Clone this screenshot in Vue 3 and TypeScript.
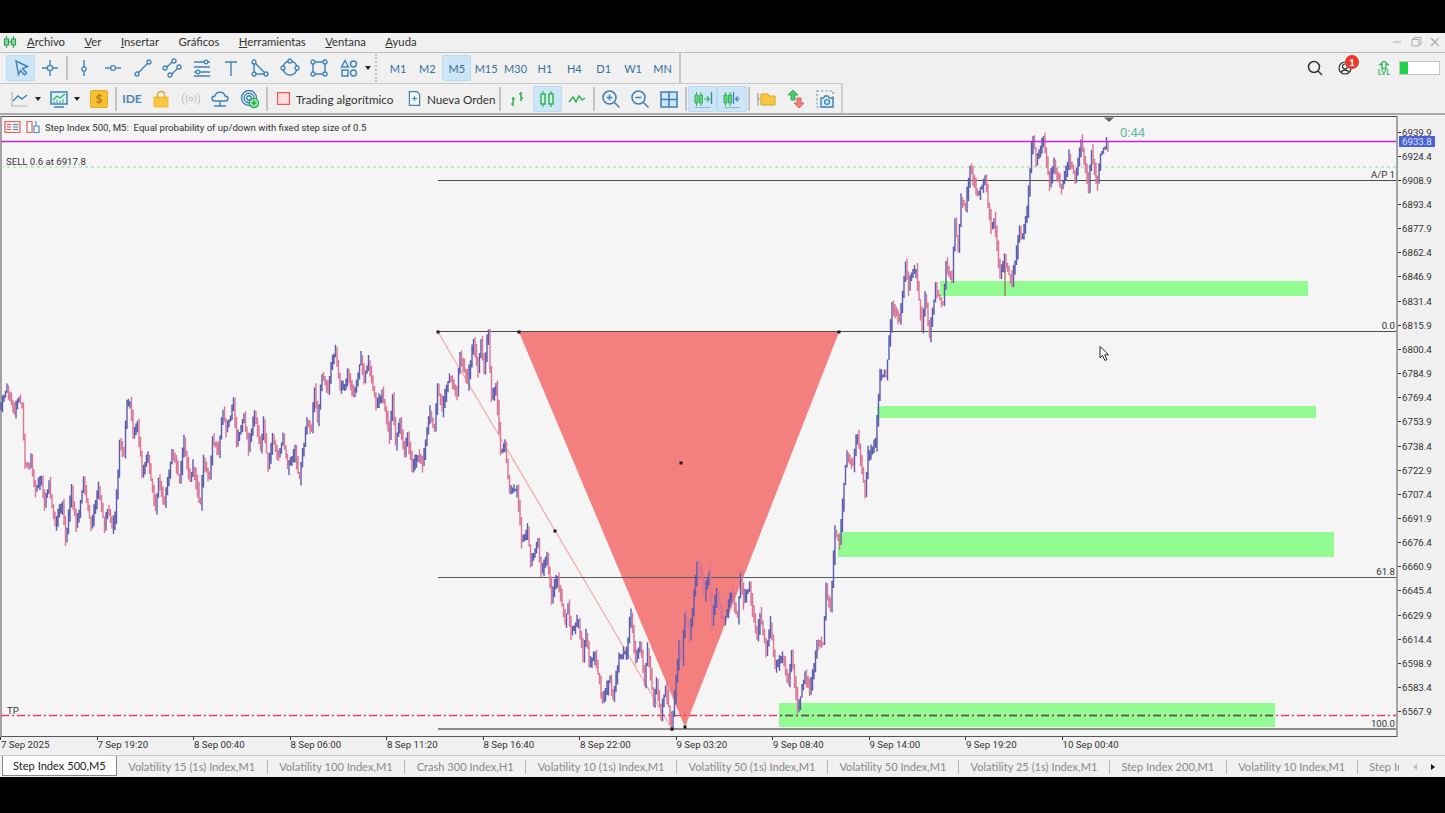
<script setup lang="ts">
interface Part {
  d: string
  c?: string
  f?: string
  w?: number
  dash?: string
}

interface ToolItem {
  kind: 'btn' | 'sep' | 'grip' | 'caret' | 'tf' | 'word' | 'coin' | 'wide'
  w: number
  ml?: number
  on?: boolean
  text?: string
  parts?: Part[]
}

const BLUE = '#3f83b9'
const GREEN = '#2fb457'

const ring = (x: number, y: number, r: number) =>
  `M${x - r} ${y}a${r} ${r} 0 1 0 ${r * 2} 0a${r} ${r} 0 1 0 ${-r * 2} 0Z`

const ln = (d: string, c = BLUE, w = 1.4): Part => ({ d, c, w })
const nodes = (pts: number[][], r = 2): Part[] =>
  pts.map(([x, y]) => ({ d: ring(x, y, r), c: BLUE, f: '#f0f0f0', w: 1.3 }))

const btn = (parts: Part[], on = false, w = 29.4, ml = 0): ToolItem => ({ kind: 'btn', w, on, ml, parts })
const sep = (w: number): ToolItem => ({ kind: 'sep', w })

const topTools: ToolItem[] = [
  btn([ln('M5 3L16.5 8.5L11.5 10.5L15.5 15L13.5 17L9.5 12.5L7.5 16.5Z')], true),
  btn([ln('M10 2V18M2 10H18'), ...nodes([[10, 10]], 2.6)]),
  sep(4.6),
  btn([ln('M10 2V18'), ...nodes([[10, 11]], 2.2)]),
  btn([ln('M2 10H18'), ...nodes([[10, 10]], 2.4)]),
  btn([ln('M4 16L16 4'), ...nodes([[4, 16], [16, 4]])]),
  btn([ln('M3 11L11 3M9 17L17 9'), ...nodes([[3, 10], [12, 3], [8, 17], [17, 9]])]),
  btn([ln('M2 4H18M2 9H18M2 14H18M2 18H18'), ...nodes([[14, 4], [6, 14]], 1.8)]),
  btn([ln('M4 4H16M10 4V18')]),
  btn([ln('M4 4V16H16L4 4'), ...nodes([[4, 4], [4, 16], [16, 16]])]),
  btn([ln(ring(10, 10, 7)), ...nodes([[10, 3], [3, 10], [17, 10]])]),
  btn([ln('M4 4H16V16H4Z'), ...nodes([[4, 4], [16, 4], [4, 16], [16, 16]])]),
  btn([ln('M6 2.5L9.5 9H2.5Z'), ln(ring(14.5, 6, 3)), ln('M3 12H9V18H3Z'), ln(ring(14.5, 15, 3))]),
  { kind: 'caret', w: 9 },
  { kind: 'grip', w: 11 },
  ...['M1', 'M2', 'M5', 'M15', 'M30', 'H1', 'H4', 'D1', 'W1', 'MN'].map(
    (text): ToolItem => ({ kind: 'tf', w: 29.4, text, on: text === 'M5' })
  ),
]

const shift: Part[] = [
  { d: 'M3.500 3V17M8 3V17', c: GREEN, w: 1 },
  { d: 'M2 6H5V14H2ZM6.500 6H9.500V14H6.500Z', c: GREEN, f: '#6fd08c', w: 1 },
]

const bottomTools: ToolItem[] = [
  btn([ln('M2 3V17H18', '#b5b5b5', 1.2), ln('M3 12L8 7L12 10L17 6')], false, 28),
  { kind: 'caret', w: 8 },
  btn(
    [
      { d: 'M2 3H18V15H2Z', c: BLUE, f: '#dff0f8', w: 1.5 },
      ln('M4 11L8 7L11 9L16 5', GREEN, 1.2),
      ln('M5 14V12M8 14V11M11 14V12M14 14V10', GREEN, 1),
      ln('M5 18H15', BLUE, 1.5),
    ],
    false,
    28,
    3
  ),
  { kind: 'caret', w: 8 },
  { kind: 'coin', w: 30, ml: 3, text: '$' },
  sep(3.3),
  { kind: 'word', w: 29.4, text: 'IDE' },
  btn([
    { d: 'M3 8H17V18H3Z', c: '#f4bd32', f: '#f6c544', w: 1 },
    ln('M6.5 9V5.5C6.5 1.5 13.5 1.5 13.5 5.5V9', '#e0a020', 1.3),
  ]),
  btn([
    ln(ring(10, 10, 1.8), '#c6c6c6', 1.3),
    ln('M6.5 6C4.5 8 4.5 12 6.5 14M13.5 6C15.5 8 15.5 12 13.5 14M3.5 4C0.5 8 0.5 12 3.5 16M16.5 4C19.5 8 19.5 12 16.5 16', '#c6c6c6', 1.2),
  ]),
  btn([ln('M5 12C1 12 1 7 5 7C6 2 14 2 15 7C19 7 19 12 15 12ZM10 12V17M4 17H16')]),
  btn([
    ln(ring(9, 9, 7.5)),
    ln(ring(9, 9, 4.8)),
    ln(ring(9, 9, 2.2)),
    { d: ring(14, 14, 4.6), c: '#22a84f', f: '#8fe6a6', w: 1.1 },
    ln('M11.8 14H16.2M14 11.8V16.2', '#128a3a', 1.1),
  ]),
  sep(5),
  {
    kind: 'wide',
    w: 127,
    text: 'Trading algorítmico',
    parts: [{ d: 'M3 3H17V17H3Z', c: '#e2605c', f: '#fbe0de', w: 1.5 }],
  },
  {
    kind: 'wide',
    w: 96,
    ml: 4,
    text: 'Nueva Orden',
    parts: [
      { d: 'M4 2H13L16 5V18H4Z', c: BLUE, f: '#f7fbfd', w: 1.4 },
      ln('M7 10H13M10 7V13'),
    ],
  },
  sep(7),
  btn([ln('M5 17V8M3 15H5M5 10H7M13 12V3M11 5H13M13 9H15', GREEN, 1.6)]),
  btn(
    [
      { d: 'M6 2V18M14 2V18', c: GREEN, w: 1.2 },
      { d: 'M4 5H8V15H4ZM12 5H16V15H12Z', c: GREEN, f: '#d7f2df', w: 1.5 },
    ],
    true
  ),
  btn([ln('M2 13L6 8L9 13L12 7L15 11L18 9', GREEN, 1.5)]),
  sep(4.5),
  btn([ln(ring(8.5, 8.5, 6.5), BLUE, 1.6), ln('M13.5 13.5L18.5 18.5M5.5 8.5H11.5M8.5 5.5V11.5', BLUE, 1.5)]),
  btn([ln(ring(8.5, 8.5, 6.5), BLUE, 1.6), ln('M13.5 13.5L18.5 18.5M5.5 8.5H11.5', BLUE, 1.5)]),
  btn([{ d: 'M2 3H18V18H2Z', c: BLUE, f: '#cfe6f3', w: 1.6 }, ln('M2 10.5H18M10 3V18', BLUE, 1.6)]),
  sep(4),
  btn([...shift, ln('M11 10H16M14 7.5L16.5 10L14 12.5', GREEN, 1.2), ln('M18.500 3V15', BLUE, 1.4), ln('M2 18.500H18', '#9fb2c0', 1)], true),
  btn([...shift, ln('M18 10H14M16 7.5L13.5 10L16 12.5', BLUE, 1.2), ln('M11.500 3V15', BLUE, 1.4), ln('M2 18.500H18', '#9fb2c0', 1)], true),
  sep(5),
  btn([
    ln('M1 4V17M1 10H4', '#999', 1.2),
    { d: 'M4 5H11L12 7H18V16H4Z', c: '#d9a520', f: '#f6c940', w: 1 },
  ]),
  btn([
    { d: 'M7 1L12 6H9V11H5V6H2Z', c: GREEN, f: '#4cc873', w: 1 },
    { d: 'M13 19L18 14H15V9H11V14H8Z', c: '#e4605c', f: '#f0827e', w: 1 },
  ]),
  btn([
    { d: 'M2 2H18V18H2Z', c: '#7a8a96', w: 1.1, dash: '2.2 2' },
    { d: 'M6 9H8.5L10 7H13L14.5 9H18V18H6Z', c: BLUE, f: '#dcecf6', w: 1.4 },
    ln(ring(12, 13, 2.4), BLUE, 1.3),
  ]),
]

const menus = [
  ['A', 'rchivo'],
  ['V', 'er'],
  ['I', 'nsertar'],
  ['', 'Gráficos'],
  ['H', 'erramientas'],
  ['V', 'entana'],
  ['A', 'yuda'],
]

const legend = 'Step Index 500, M5:  Equal probability of up/down with fixed step size of 0.5'

const prices = Array.from({ length: 25 }, (_, i) => (6939.9 - i * 15.5).toFixed(1))

const times = [
  '7 Sep 2025',
  '7 Sep 19:20',
  '8 Sep 00:40',
  '8 Sep 06:00',
  '8 Sep 11:20',
  '8 Sep 16:40',
  '8 Sep 22:00',
  '9 Sep 03:20',
  '9 Sep 08:40',
  '9 Sep 14:00',
  '9 Sep 19:20',
  '10 Sep 00:40',
]

const tabs = [
  'Volatility 15 (1s) Index,M1',
  'Volatility 100 Index,M1',
  'Crash 300 Index,H1',
  'Volatility 10 (1s) Index,M1',
  'Volatility 50 (1s) Index,M1',
  'Volatility 50 Index,M1',
  'Volatility 25 (1s) Index,M1',
  'Step Index 200,M1',
  'Volatility 10 Index,M1',
]

const zones = [
  { x: 940, y: 281, w: 368, h: 15 },
  { x: 877, y: 406, w: 439, h: 12 },
  { x: 838, y: 532, w: 496, h: 25 },
  { x: 779, y: 703, w: 496, h: 24 },
]

const levels = [
  { y: 180.5, label: 'A/P 1', color: '#4a4a4a', w: 1.2 },
  { y: 331.5, label: '0.0', color: '#4a4a4a', w: 1.2 },
  { y: 577.5, label: '61.8', color: '#5a5a5a', w: 1.2 },
  { y: 729, label: '100.0', color: '#8a8a8a', w: 2 },
]

const handles = [
  [438, 332],
  [519, 332],
  [839, 332],
  [685, 727],
  [672, 729],
  [555, 531],
  [681, 463],
]

// rough path of the price, in page pixels
const path = [
  [0, 410], [18, 402], [30, 470], [65, 522], [85, 500], [112, 520], [130, 402], [155, 495],
  [175, 458], [200, 480], [225, 422], [260, 440], [298, 462], [330, 360], [345, 392], [365, 362],
  [380, 400], [418, 468], [440, 398], [470, 358], [487, 350], [500, 430], [525, 545], [545, 572],
  [585, 645], [610, 694], [630, 632], [650, 680], [672, 712], [685, 632], [700, 582], [720, 610],
  [745, 592], [765, 642], [800, 686], [815, 676], [830, 590], [845, 480], [857, 440], [865, 482],
  [885, 362], [910, 260], [925, 320], [945, 288], [970, 176], [985, 198], [1005, 272], [1022, 234],
  [1032, 150], [1060, 176], [1075, 156], [1097, 178], [1107, 130],
]

function priceAt(x: number): number {
  for (let i = 1; i < path.length; i++) {
    if (x <= path[i][0]) {
      const [x0, y0] = path[i - 1]
      const [x1, y1] = path[i]
      return y0 + ((y1 - y0) * (x - x0)) / (x1 - x0)
    }
  }
  return path[path.length - 1][1]
}

function buildCandles() {
  let seed = 90217
  const rnd = () => {
    seed = (seed * 16807) % 2147483647
    return seed / 2147483647
  }
  let up = ''
  let down = ''
  let prev = priceAt(0)
  let zig = 0
  let aim = 0
  let left = 0
  let sign = 1
  for (let x = 1; x <= 1109; x += 1.5) {
    if (left <= 0) {
      sign = -sign
      aim = sign * (6 + rnd() * 20)
      left = 2 + Math.floor(rnd() * 4)
    }
    zig += (aim - zig) / left
    left--
    const close = priceAt(x) + zig
    const top = Math.max(124, Math.min(prev, close) - rnd() * 8)
    const bottom = Math.min(731, Math.max(prev, close) + rnd() * 8)
    const seg = `M${x} ${top.toFixed(1)}V${bottom.toFixed(1)}`
    if (close < prev) up += seg
    else down += seg
    prev = close
  }
  return { up, down }
}

const candles = buildCandles()
</script>

<template>
  <div class="screen">
    <div class="window">
      <header class="titlebar">
        <svg class="logo" viewBox="0 0 14 14" width="14" height="14">
          <path d="M3.5 1V13M10.5 1V13" stroke="#39a85a" stroke-width="1.2" />
          <path d="M1.5 4H5.5V10H1.5ZM8.5 4H12.5V10H8.5Z" fill="#8fd8a4" stroke="#2d9a4f" stroke-width="1.2" />
          <path d="M5.5 7H8.5" stroke="#2d9a4f" stroke-width="1.2" />
        </svg>
        <nav class="menu">
          <span v-for="m in menus" :key="m[1]" class="menu-item"><u>{{ m[0] }}</u>{{ m[1] }}</span>
        </nav>
        <div class="win-btns">
          <svg viewBox="0 0 46 12" width="46" height="12">
            <path d="M0 6H8" stroke="#bbb" stroke-width="1.2" />
            <path d="M19 3.500H26V10H19ZM21 3.500V1.500H28V8H26" fill="none" stroke="#aaa" stroke-width="1" />
            <path d="M38 2L46 10M46 2L38 10" stroke="#aaa" stroke-width="1.2" />
          </svg>
        </div>
      </header>

      <div class="toolrow">
        <div class="group group-top">
          <template v-for="(t, i) in topTools" :key="i">
            <span v-if="t.kind === 'sep'" class="sep" :style="{ width: t.w + 'px' }"></span>
            <span v-else-if="t.kind === 'grip'" class="grip" :style="{ width: t.w + 'px' }"></span>
            <span v-else-if="t.kind === 'caret'" class="caret-box" :style="{ width: t.w + 'px' }"><i class="caret"></i></span>
            <span v-else-if="t.kind === 'tf'" class="tool tf" :class="{ on: t.on }" :style="{ width: t.w + 'px' }">{{ t.text }}</span>
            <span v-else class="tool" :class="{ on: t.on }" :style="{ width: t.w + 'px' }">
              <svg viewBox="0 0 20 20" width="20" height="20">
                <path
                  v-for="(p, n) in t.parts"
                  :key="n"
                  :d="p.d"
                  :stroke="p.c"
                  :fill="p.f || 'none'"
                  :stroke-width="p.w"
                  :stroke-dasharray="p.dash"
                />
              </svg>
            </span>
          </template>
        </div>
        <div class="status">
          <svg viewBox="0 0 16 16" width="16" height="16" class="st-search">
            <path d="M1.500 7A5.500 5.500 0 1 0 12.500 7A5.500 5.500 0 1 0 1.500 7ZM11 11L15 15" fill="none" stroke="#333" stroke-width="1.5" />
          </svg>
          <span class="st-user">
            <svg viewBox="0 0 14 14" width="14" height="14">
              <path d="M1 7A6 6 0 1 0 13 7A6 6 0 1 0 1 7ZM4.500 5.500A2.500 2.500 0 1 0 9.500 5.500A2.500 2.500 0 1 0 4.500 5.500ZM3 11C5 8.500 9 8.500 11 11" fill="none" stroke="#333" stroke-width="1.2" />
            </svg>
            <b class="badge">1</b>
          </span>
          <span class="st-lvl">
            <svg viewBox="0 0 14 8" width="14" height="8">
              <path d="M7 0L11 3.500H9V7.500H5V3.500H3Z" fill="none" stroke="#2fb457" stroke-width="1.3" />
            </svg>
            <em>LVL</em>
          </span>
          <span class="meter"><i></i></span>
        </div>
      </div>

      <div class="toolrow toolrow-low">
        <div class="group group-low">
          <template v-for="(t, i) in bottomTools" :key="i">
            <span v-if="t.kind === 'sep'" class="sep" :style="{ width: t.w + 'px' }"></span>
            <span v-else-if="t.kind === 'caret'" class="caret-box" :style="{ width: t.w + 'px' }"><i class="caret"></i></span>
            <span v-else-if="t.kind === 'word'" class="tool word" :style="{ width: t.w + 'px' }">{{ t.text }}</span>
            <span v-else-if="t.kind === 'coin'" class="tool" :style="{ width: t.w + 'px', marginLeft: t.ml + 'px' }"><b class="coin">{{ t.text }}</b></span>
            <span v-else class="tool" :class="{ on: t.on, wide: t.kind === 'wide' }" :style="{ width: t.w + 'px', marginLeft: (t.ml || 0) + 'px' }">
              <svg viewBox="0 0 20 20" :width="t.kind === 'wide' ? 17 : 20" :height="t.kind === 'wide' ? 17 : 20">
                <path
                  v-for="(p, n) in t.parts"
                  :key="n"
                  :d="p.d"
                  :stroke="p.c"
                  :fill="p.f || 'none'"
                  :stroke-width="p.w"
                  :stroke-dasharray="p.dash"
                />
              </svg>
              <span v-if="t.text" class="tool-text">{{ t.text }}</span>
            </span>
          </template>
        </div>
      </div>

      <main class="chart-row">
        <svg class="plot" viewBox="0 114 1398 624" width="1398" height="624">
          <rect x="1" y="116.500" width="1396" height="620" fill="#f5f5f5" stroke="#555" stroke-width="1" />

          <rect v-for="z in zones" :key="z.y" :x="z.x" :y="z.y" :width="z.w" :height="z.h" fill="#92fb92" />

          <path d="M519 332H839L685 727Z" fill="#f47f7f" />
          <path d="M438 332L672 729" stroke="#f5a8a8" stroke-width="1.2" />

          <path d="M1 167H1396" stroke="#93da93" stroke-width="1" stroke-dasharray="3 3" />
          <path d="M1 715.500H1396" stroke="#e8405c" stroke-width="1.3" stroke-dasharray="8 3 2 3" />
          <path d="M779 715.500H1275" stroke="#585858" stroke-width="1.3" stroke-dasharray="8 3 2 3" stroke-dashoffset="10" />

          <template v-for="l in levels" :key="l.y">
            <path :d="`M438 ${l.y}H1396`" :stroke="l.color" :stroke-width="l.w" />
            <text class="note" x="1395" :y="l.y - 2.5" text-anchor="end">{{ l.label }}</text>
          </template>

          <path :d="candles.up" stroke="#5d5cae" stroke-width="1.4" fill="none" />
          <path :d="candles.down" stroke="#dc7596" stroke-width="1.4" fill="none" />
          <path d="M1005 268V296" stroke="#9a6a55" stroke-width="1.2" />

          <rect v-for="(h, i) in handles" :key="i" :x="h[0] - 1.500" :y="h[1] - 1.500" width="3" height="3" fill="#1a1a1a" />

          <path d="M1 141.500H1396" stroke="#c425cf" stroke-width="1.6" />
          <path d="M1104 117.500H1114L1109 122Z" fill="#666" />

          <g class="legend-icons">
            <path d="M5 121.500H20V132.500H5Z" fill="#fbeaea" stroke="#e2605c" stroke-width="1.2" />
            <path d="M7 124.500H11M7 127H11M7 129.500H11" stroke="#e2605c" stroke-width="1.2" />
            <path d="M13 124.500H18M13 127H18M13 129.500H18" stroke="#4a8ac0" stroke-width="1.2" />
            <path d="M27 121.500H32V132.500H27Z" fill="#fff" stroke="#e2605c" stroke-width="1.2" />
            <path d="M34 126H39V132.500H34Z" fill="#fff" stroke="#4a8ac0" stroke-width="1.2" />
            <path d="M36 121V126" stroke="#4a8ac0" stroke-width="1.2" />
          </g>
          <text class="note" x="45" y="130.500">{{ legend }}</text>
          <text class="note" x="6" y="165">SELL 0.6 at 6917.8</text>
          <text class="note" x="7" y="714">TP</text>
          <text class="timer" x="1120" y="137">0:44</text>

          <path d="M1100 346.500V358L1102.500 355.500L1105 360.500L1107 359.500L1104.800 354.800H1108.500Z" fill="#fff" stroke="#222" stroke-width="1" />
        </svg>

        <div class="price-axis">
          <span v-for="p in prices" :key="p" class="price">{{ p }}</span>
          <span class="price-now">6933.8</span>
        </div>
      </main>

      <div class="time-axis">
        <span v-for="t in times" :key="t" class="time">{{ t }}</span>
      </div>

      <footer class="tabs">
        <span class="tab tab-active">Step Index 500,M5</span>
        <span v-for="t in tabs" :key="t" class="tab">{{ t }}</span>
        <span class="tab tab-cut">Step In</span>
        <span class="tab-nav">
          <i class="arrow arrow-left"></i>
          <i class="arrow arrow-right"></i>
        </span>
      </footer>
    </div>
  </div>
</template>

<style scoped>
.screen {
  width: 1445px;
  height: 813px;
  background: #000;
  padding-top: 33px;
  box-sizing: border-box;
  overflow: hidden;
  font-family: Lato, Roboto, sans-serif;
}

.window {
  height: 744px;
  background: #f0f0f0;
  display: flex;
  flex-direction: column;
}

.titlebar {
  height: 20px;
  flex: none;
  box-sizing: border-box;
  display: flex;
  align-items: center;
  border-bottom: 1px solid #bdbdbd;
  padding: 0 0 2px 3px;
}

.menu {
  display: flex;
  margin-left: 10px;
  gap: 19.500px;
  font-size: 11.300px;
  color: #333;
}

.menu-item u {
  text-decoration-thickness: 1px;
}

.win-btns {
  margin-left: auto;
  margin-right: 6px;
  display: flex;
}

.toolrow {
  display: flex;
  height: 30px;
  flex: none;
}

.toolrow-low {
  border-bottom: 2px solid #a9a9a9;
}

.group {
  display: flex;
  align-items: center;
  padding-left: 6px;
  box-sizing: border-box;
}

.group-top {
  width: 681px;
  border-right: 2px solid #c8c8c8;
}

.group-low {
  width: 843px;
  border-top: 1px solid #c8c8c8;
  border-right: 2px solid #d0d0d0;
}

.tool {
  height: 26px;
  flex: none;
  display: flex;
  align-items: center;
  justify-content: center;
  box-sizing: border-box;
  border-radius: 2px;
}

.tool svg {
  flex: none;
}

.tool.on {
  background: #cde6f7;
  outline: 1px solid #bcdcf1;
  outline-offset: -1px;
}

.tf {
  font-size: 11px;
  color: #33709f;
}

.word {
  font-size: 12px;
  font-weight: 700;
  color: #4a86b8;
}

.coin {
  width: 16px;
  height: 16px;
  border-radius: 2px;
  background: #f6c233;
  border: 1px solid #e8ab20;
  color: #b5781a;
  font-size: 12px;
  font-weight: 700;
  line-height: 16px;
  text-align: center;
}

.wide {
  justify-content: flex-start;
  gap: 3.7px;
  padding-left: 6px;
}

.tool-text {
  font-size: 11.700px;
  color: #333;
  white-space: nowrap;
}

.sep {
  flex: none;
  height: 24px;
  position: relative;
  display: flex;
  justify-content: center;
}

.sep::before {
  content: "";
  width: 2px;
  background: #c4c4c4;
}

.grip {
  flex: none;
  height: 28px;
  display: flex;
  justify-content: center;
}

.grip::before {
  content: "";
  width: 2px;
  margin-right: 1px;
  border-left: 2px dotted #c0c0c0;
}

.caret-box {
  flex: none;
  display: flex;
  justify-content: center;
}

.caret {
  width: 0;
  height: 0;
  border-left: 3.5px solid transparent;
  border-right: 3.5px solid transparent;
  border-top: 4px solid #222;
}

.status {
  margin-left: auto;
  position: relative;
  display: flex;
  align-items: center;
  padding-right: 5px;
}

.st-search {
  margin-right: 15px;
}

.st-user {
  position: relative;
  display: flex;
  margin-right: 25px;
}

.badge {
  position: absolute;
  left: 7px;
  top: -6px;
  width: 14px;
  height: 14px;
  border-radius: 50%;
  background: #e5392c;
  color: #fff;
  font-size: 10px;
  font-weight: 700;
  line-height: 14px;
  text-align: center;
}

.st-lvl {
  display: flex;
  flex-direction: column;
  align-items: center;
  margin-right: 8px;
}

.st-lvl em {
  font-style: normal;
  font-weight: 700;
  font-size: 7.500px;
  line-height: 7px;
  color: #2fb457;
}

.meter {
  width: 41px;
  height: 14px;
  background: #fff;
  border: 1px solid #c5c5c5;
  box-sizing: border-box;
  display: flex;
}

.meter i {
  width: 8px;
  background: #22d14a;
}

.chart-row {
  height: 623px;
  flex: none;
  display: flex;
  background: #f0f0f0;
}

.plot {
  flex: none;
  display: block;
  margin-top: -1px;
}

.note {
  font-family: Roboto, sans-serif;
  font-size: 9.600px;
  fill: #333;
  white-space: pre;
}

.timer {
  font-family: Roboto, sans-serif;
  font-size: 13px;
  fill: #63bd96;
}

.price-axis {
  position: relative;
  flex: none;
  width: 47px;
  padding-top: 12.500px;
  box-sizing: border-box;
  display: flex;
  flex-direction: column;
  font-family: Roboto, sans-serif;
  font-size: 9.700px;
  color: #333;
}

.price {
  height: 24.17px;
  line-height: 9px;
  padding-left: 4px;
  flex: none;
  background: linear-gradient(#333, #333) 0 4px / 3px 1px no-repeat;
}

.price-now {
  position: absolute;
  left: 1px;
  top: 21px;
  width: 36px;
  height: 11px;
  padding-left: 3px;
  box-sizing: border-box;
  background: #4a62d8;
  color: #dfe4ff;
  line-height: 11px;
}

.time-axis {
  height: 18px;
  margin-top: -1px;
  flex: none;
  display: flex;
  font-family: Roboto, sans-serif;
  font-size: 9.700px;
  color: #333;
}

.time {
  width: 96.500px;
  flex: none;
  padding-left: 1px;
  box-sizing: border-box;
  line-height: 16px;
  white-space: nowrap;
  background: linear-gradient(#333, #333) 0 0 / 1px 3px no-repeat;
}

.tabs {
  flex: 1;
  position: relative;
  display: flex;
  align-items: center;
  border-top: 1px solid #c9c9c9;
  font-size: 11.100px;
  color: #8a8a8a;
  overflow: hidden;
}

.tab {
  flex: none;
  padding: 0 11.500px;
  height: 14px;
  line-height: 14px;
  border-right: 1px solid #b5b5b5;
  white-space: nowrap;
}

.tab-active {
  height: 20px;
  line-height: 19px;
  margin-left: 2px;
  padding: 0 10px;
  background: #fff;
  color: #222;
  border: 1px solid #888;
  border-top: none;
  box-sizing: border-box;
  align-self: flex-start;
}

.tab-cut {
  border-right: none;
  width: 36px;
  padding-right: 0;
  overflow: hidden;
}

.tab-nav {
  position: absolute;
  right: 0;
  top: 0;
  width: 46px;
  height: 100%;
  background: #f0f0f0;
  display: flex;
  align-items: center;
  gap: 14px;
  padding-left: 14px;
  box-sizing: border-box;
}

.arrow {
  width: 0;
  height: 0;
  border-top: 3px solid transparent;
  border-bottom: 3px solid transparent;
}

.arrow-left {
  border-right: 4px solid #bbb;
}

.arrow-right {
  border-left: 4px solid #111;
}
</style>

<style>
html,
body {
  margin: 0;
  background: #000;
}
</style>
